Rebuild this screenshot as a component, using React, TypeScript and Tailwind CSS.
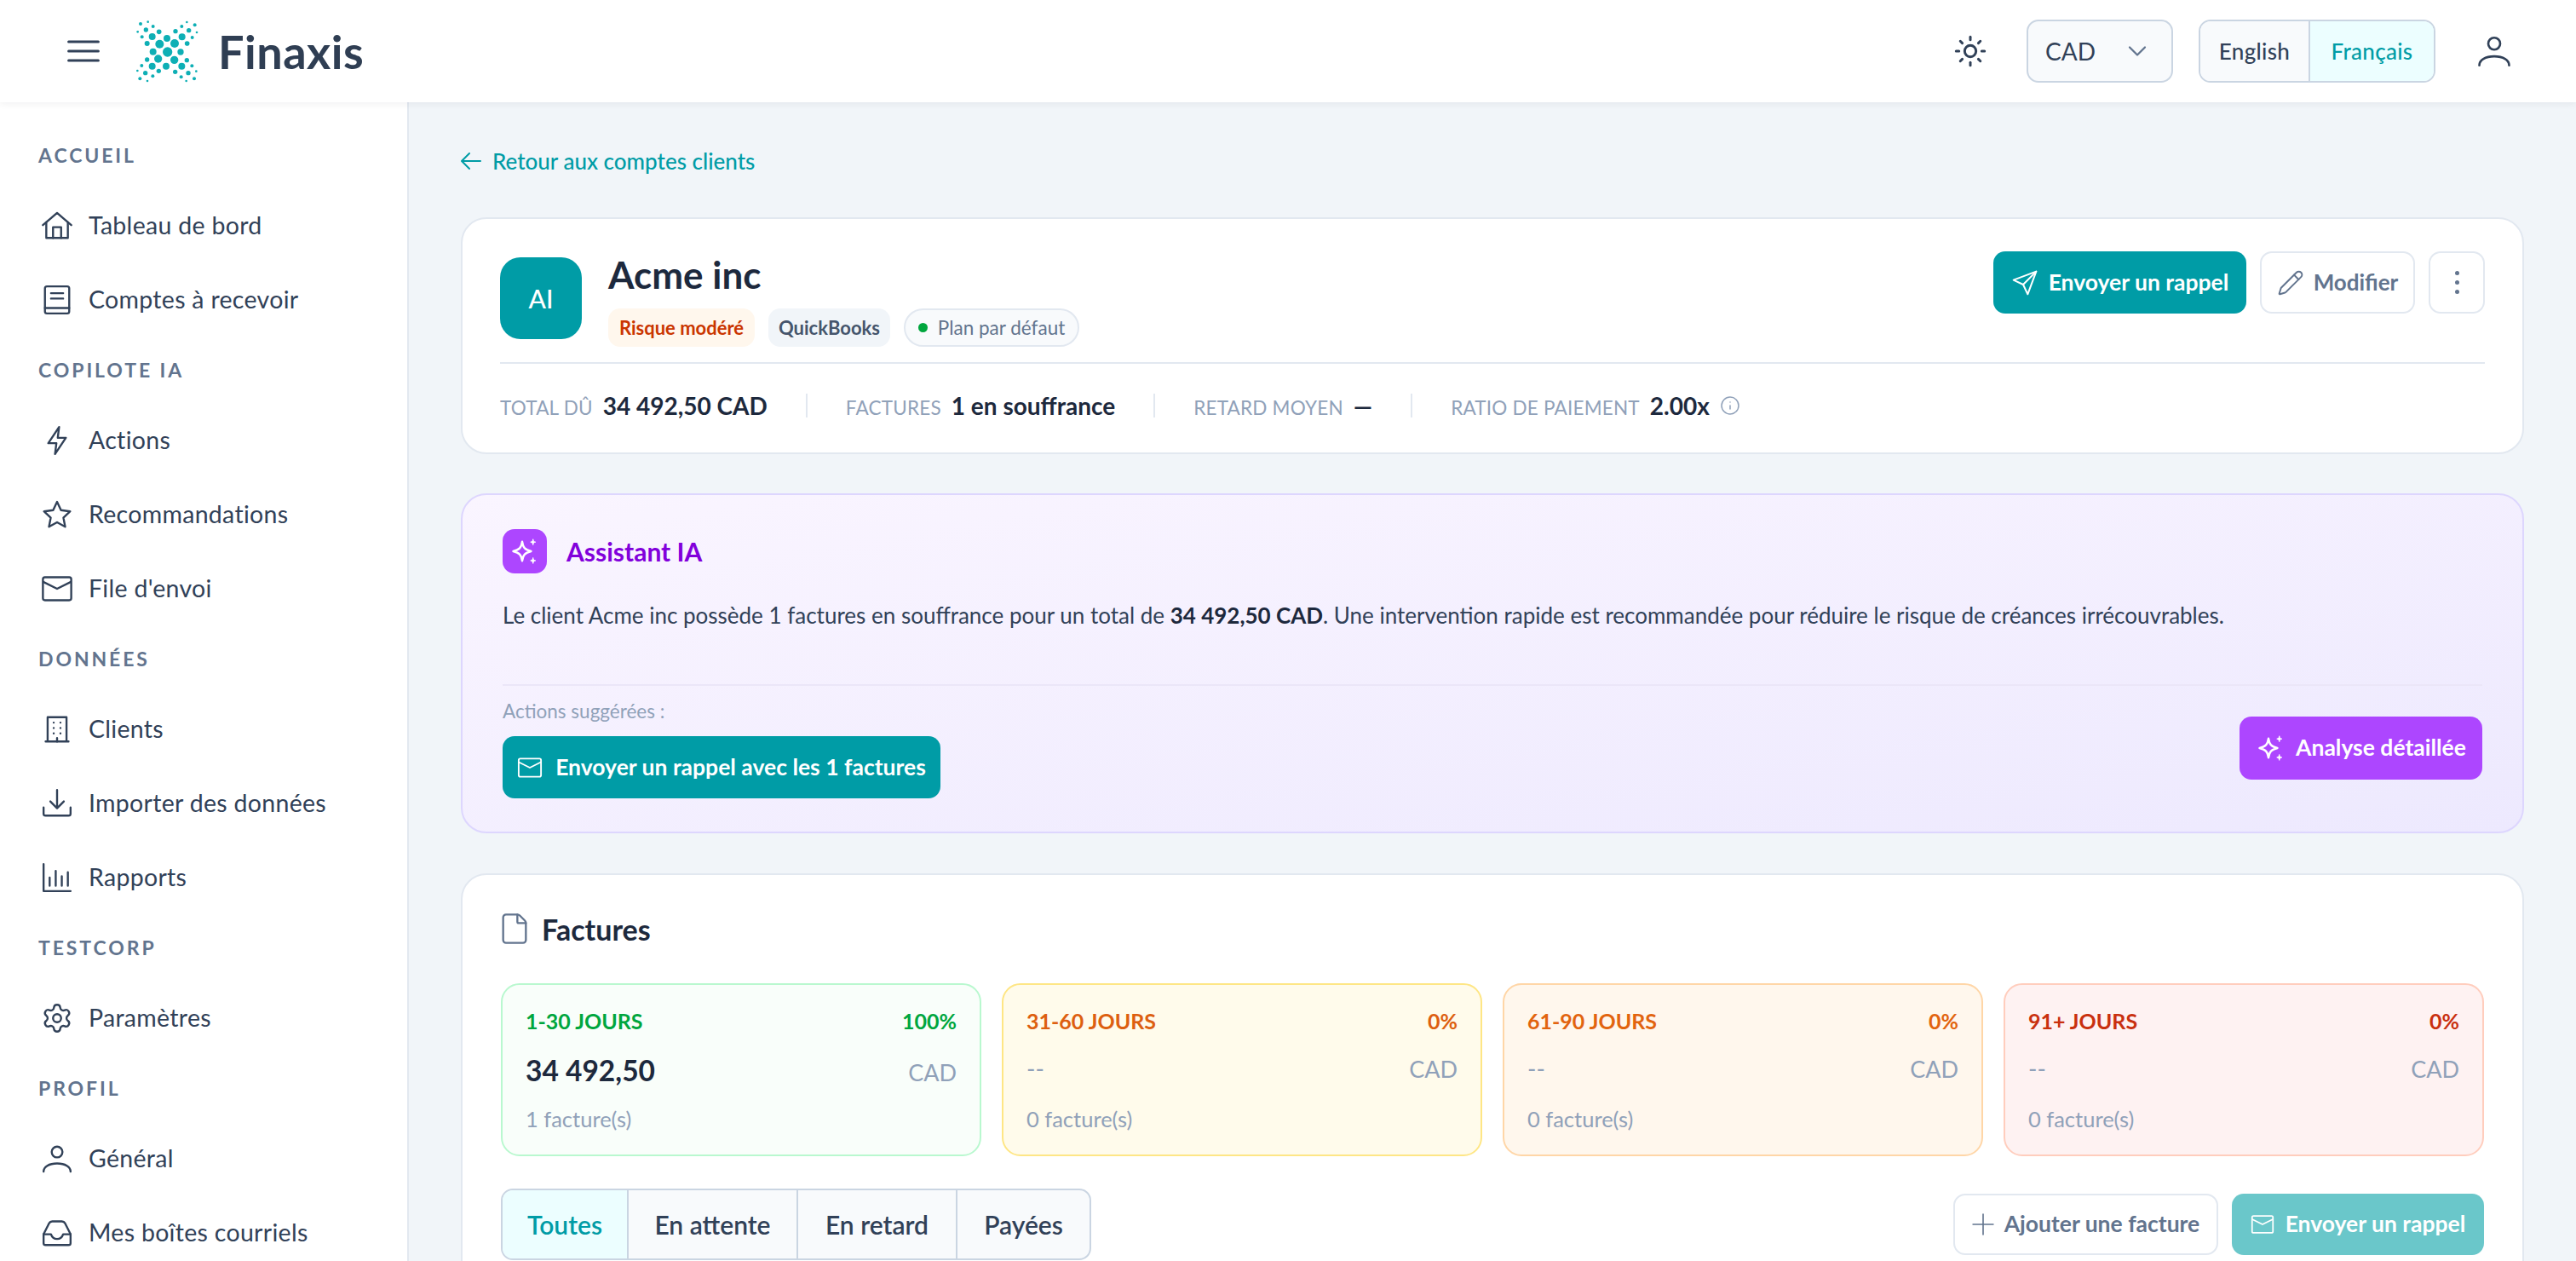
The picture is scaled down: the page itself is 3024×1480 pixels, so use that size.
import { ChevronDown, File, Info, Pencil, Settings, Sun } from "lucide-react";
import type { ReactNode } from "react";

function Ico({ children, className = "w-[38px] h-[38px]", sw = 1.5 }: { children: ReactNode; className?: string; sw?: number }) {
  return (
    <svg viewBox="0 0 24 24" fill="none" stroke="currentColor" strokeWidth={sw} strokeLinecap="round" strokeLinejoin="round" className={className}>
      {children}
    </svg>
  );
}

const HomeIcon = () => (
  <Ico>
    <path d="M1.500 11.500 12 2.500l10.500 9" />
    <path d="M4 9.500V21h16V9.500" />
    <path d="M9 21v-8h6v8" />
  </Ico>
);
const BookIcon = () => (
  <Ico>
    <rect x="3" y="2" width="18" height="20" rx="1.500" />
    <path d="M7.500 7h9M7.500 11h9M3 18h18" />
  </Ico>
);
const BoltIcon = () => (
  <Ico>
    <path d="M13.500 2 5.500 14h6l-1 8L18.500 10h-6z" />
  </Ico>
);
const StarIcon = () => (
  <Ico>
    <path d="m12 2.500 2.900 6.200 6.800.9-5 4.700 1.300 6.700-6-3.300-6 3.300 1.300-6.700-5-4.700 6.800-.9z" />
  </Ico>
);
const MailIcon = ({ className }: { className?: string }) => (
  <Ico className={className}>
    <rect x="1.500" y="3.500" width="21" height="17" rx="1.500" />
    <path d="m2 7 10 5 10-5" />
  </Ico>
);
const BuildingIcon = () => (
  <Ico>
    <path d="M5 21V3h14v18M3.500 21h17" />
    <path d="M9.500 7h.01M14.500 7h.01M9.500 11h.01M14.500 11h.01M9.500 15h.01M14.500 15h.01M12 18.500V21" />
  </Ico>
);
const DownloadIcon = () => (
  <Ico>
    <path d="M2 15v4.500A1.500 1.500 0 0 0 3.500 21h17a1.500 1.500 0 0 0 1.500-1.500V15" />
    <path d="M12 2v13M7 10.500l5 5 5-5" />
  </Ico>
);
const ChartIcon = () => (
  <Ico>
    <path d="M2 2v20h20" />
    <path d="M6.500 12v6M11 7v11M15.500 11v7M20 8v10" />
  </Ico>
);
const UserIcon = ({ className }: { className?: string }) => (
  <Ico className={className}>
    <circle cx="12" cy="7" r="4" />
    <path d="M2 21.500c0-3.500 4-6 10-6s10 2.500 10 6" />
  </Ico>
);
const InboxIcon = () => (
  <Ico>
    <path d="M2 13v6.500A1.500 1.500 0 0 0 3.500 21h17a1.500 1.500 0 0 0 1.500-1.500V13" />
    <path d="m2 13 4-8a3 3 0 0 1 2.500-1.500h7A3 3 0 0 1 18 5l4 8" />
    <path d="M2 13h5.500c.8 2.500 2.300 3.500 4.500 3.500s3.700-1 4.500-3.500H22" />
  </Ico>
);
const SparkIcon = ({ className }: { className: string }) => (
  <svg viewBox="0 0 24 24" className={className} fill="none" stroke="currentColor" strokeWidth={1.600} strokeLinejoin="round">
    <path d="M10 4.500c.7 4.700 2.200 6.400 7 7.500-4.800 1.100-6.300 2.800-7 7.500-.7-4.700-2.200-6.400-7-7.500 4.800-1.100 6.300-2.800 7-7.500Z" />
    <path d="M18.500 2.500c.2 1.500.6 2 2 2.300-1.400.3-1.800.8-2 2.300-.2-1.500-.6-2-2-2.300 1.400-.3 1.800-.8 2-2.300ZM18.500 17c.2 1.500.6 2 2 2.300-1.400.3-1.800.8-2 2.300-.2-1.500-.6-2-2-2.300 1.400-.3 1.800-.8 2-2.300Z" fill="currentColor" strokeWidth={0.6} />
  </svg>
);

const logoDots = [
  [103, 83, 6], [129, 76, 4], [147, 92, 6], [93, 111, 4], [122, 104, 8], [168, 111, 8.5], [108, 129, 6], [144, 128, 12], [196, 134, 12], [126, 152, 9], [170, 154, 15], [223, 152, 15],
  [266, 77, 4], [294, 87, 6], [248, 92, 6], [273, 106, 8], [226, 109, 8], [301, 113, 4], [285, 131, 6], [249, 129, 12], [267, 152, 8.5],
  [147, 181, 12], [198, 182, 17], [244, 182, 11], [165, 206, 14], [222, 210, 14], [126, 209, 8], [266, 211, 8],
  [107, 230, 6], [144, 232, 12], [193, 232, 12], [248, 232, 12], [284, 231, 6], [92, 248, 4], [120, 256, 8], [167, 249, 8], [225, 252, 8], [271, 256, 8], [299, 250, 4], [146, 267, 6], [246, 270, 6], [101, 276, 6], [127, 284, 4], [292, 276, 6], [264, 284, 4],
];

const nav = [
  { title: "ACCUEIL", items: [{ icon: <HomeIcon />, label: "Tableau de bord" }, { icon: <BookIcon />, label: "Comptes à recevoir" }] },
  { title: "COPILOTE IA", items: [{ icon: <BoltIcon />, label: "Actions" }, { icon: <StarIcon />, label: "Recommandations" }, { icon: <MailIcon className="w-[38px] h-[38px]" />, label: "File d'envoi" }] },
  { title: "DONNÉES", items: [{ icon: <BuildingIcon />, label: "Clients" }, { icon: <DownloadIcon />, label: "Importer des données" }, { icon: <ChartIcon />, label: "Rapports" }] },
  { title: "TESTCORP", items: [{ icon: <Settings className="w-[38px] h-[38px]" strokeWidth={1.5} />, label: "Paramètres" }] },
  { title: "PROFIL", items: [{ icon: <UserIcon className="w-[38px] h-[38px]" />, label: "Général" }, { icon: <InboxIcon />, label: "Mes boîtes courriels" }] },
];

const buckets = [
  { label: "1-30 JOURS", pct: "100%", amount: "34 492,50", count: "1 facture(s)", box: "bg-[#f9fefa] border-[#b9f8cf]", tone: "text-[#00a63e]" },
  { label: "31-60 JOURS", pct: "0%", amount: "", count: "0 facture(s)", box: "bg-[#fffbeb] border-[#fee685]", tone: "text-[#dd5f10]" },
  { label: "61-90 JOURS", pct: "0%", amount: "", count: "0 facture(s)", box: "bg-[#fff7ed] border-[#ffd6a7]", tone: "text-[#e2640f]" },
  { label: "91+ JOURS", pct: "0%", amount: "", count: "0 facture(s)", box: "bg-[#fef2f2] border-[#ffcdbd]", tone: "text-[#c9300f]" },
];

function Stat({ label, children }: { label: string; children: ReactNode }) {
  return (
    <div className="flex items-baseline gap-[12px]">
      <span className="text-[22.5px] text-[#90a1b9] tracking-[0.2px]">{label}</span>
      <span className="text-[28px] font-bold text-[#1d293d]">{children}</span>
    </div>
  );
}

const Sep = () => <div className="w-[2px] h-[28px] bg-[#e2e8f0]" />;

export default function App() {
  return (
    <div className="h-screen flex flex-col overflow-hidden bg-[#f1f5f9] text-[#314158] [font-family:Lato,sans-serif]">
      <header className="h-[120px] shrink-0 bg-white shadow-[0_2px_8px_rgba(15,23,42,0.06)] flex items-center pl-[79px] pr-[75px] relative z-10">
        <svg viewBox="0 0 24 24" className="w-[38px] h-[38px] mr-[42px]" fill="none" stroke="#314158" strokeWidth={1.9} strokeLinecap="round">
          <path d="M1 5h22M1 12h22M1 19h22" />
        </svg>
        <svg viewBox="85 68 222 222" className="w-[74px] h-[74px] mr-[23px]">
          {logoDots.map(([cx, cy, r], i) => (
            <circle key={i} cx={cx} cy={cy} r={r} fill="#0eafb5" />
          ))}
        </svg>
        <span className="text-[54px] font-bold text-[#2f3e53] tracking-[0.5px]">Finaxis</span>
        <div className="ml-auto flex items-center">
          <Sun className="w-[40px] h-[40px] mr-[46px]" strokeWidth={1.8} />
          <div className="w-[172px] h-[74px] rounded-[14px] border-2 border-[#cad5e2] bg-[#f8fafc] flex items-center justify-between pl-[20px] pr-[22px] text-[28px] mr-[30px]">
            CAD
            <ChevronDown className="w-[36px] h-[36px] text-[#62748e]" strokeWidth={1.5} />
          </div>
          <div className="flex h-[74px] w-[278px] rounded-[14px] border-2 border-[#cad5e2] overflow-hidden text-[26px] font-medium tracking-[0.3px] mr-[48px]">
            <div className="w-[129px] bg-[#f8fafc] border-r-2 border-[#cad5e2] flex items-center justify-center">English</div>
            <div className="flex-1 bg-[#ecfeff] text-[#009ca6] flex items-center justify-center">Français</div>
          </div>
          <UserIcon className="w-[42px] h-[42px]" />
        </div>
      </header>

      <div className="flex-1 flex min-h-0">
        <aside className="w-[480px] shrink-0 bg-white border-r-2 border-[#e2e8f0] pt-[23px] overflow-hidden">
          {nav.map((section) => (
            <div key={section.title}>
              <div className="h-[78px] flex items-center pl-[45px] text-[23px] font-bold text-[#62748e] tracking-[2.9px]">{section.title}</div>
              {section.items.map((item) => (
                <div key={item.label} className="h-[87px] flex items-center pl-[48px] gap-[18px] text-[28.5px] tracking-[0.3px]">
                  {item.icon}
                  <span>{item.label}</span>
                </div>
              ))}
            </div>
          ))}
        </aside>

        <main className="flex-1 min-w-0 px-[61px] pt-[49px] overflow-hidden">
          <a className="h-[40px] flex items-center gap-[13px] text-[#009ca6] text-[26px] font-medium mb-[46px]">
            <Ico className="w-[24px] h-[24px]" sw={2}>
              <path d="M23 12H2M10 3l-9 9 9 9" />
            </Ico>
            Retour aux comptes clients
          </a>

          <section className="bg-white border-2 border-[#e2e8f0] rounded-[30px] px-[44px] pt-[36px] pb-[41px]">
            <div className="flex justify-between border-b-2 border-[#e2e8f0] pb-[18px]">
              <div className="flex items-center gap-[31px]">
                <div className="w-[96px] h-[96px] rounded-[24px] bg-[#009ca6] text-white flex items-center justify-center text-[30px] font-medium">AI</div>
                <div>
                  <div className="text-[44px] leading-[58px] font-bold text-[#1d293d]">Acme inc</div>
                  <div className="flex gap-[16px] mt-[11px]">
                    <span className="h-[45px] w-[172px] rounded-[14px] bg-[#fff7ed] text-[#ca3500] text-[22px] font-bold flex items-center justify-center">Risque modéré</span>
                    <span className="h-[45px] w-[143px] rounded-[14px] bg-[#f1f5f9] text-[#45556c] text-[22px] font-bold flex items-center justify-center">QuickBooks</span>
                    <span className="h-[45px] w-[206px] rounded-full bg-[#f8fafc] border-2 border-[#e2e8f0] text-[#62748e] text-[22.5px] flex items-center justify-center gap-[12px]">
                      <i className="w-[11px] h-[11px] rounded-full bg-[#00a63e]" />
                      Plan par défaut
                    </span>
                  </div>
                </div>
              </div>
              <div className="flex items-start gap-[16px] mt-[2px]">
                <button className="w-[297px] h-[73px] rounded-[14px] bg-[#009ca6] text-white text-[26.5px] font-bold flex items-center justify-center gap-[12px]">
                  <Ico className="w-[32px] h-[32px]">
                    <path d="M22 2 2 9.500l8.500 4L14.500 22z" />
                    <path d="M22 2 10.500 13.500" />
                  </Ico>
                  Envoyer un rappel
                </button>
                <button className="w-[182px] h-[73px] rounded-[14px] border-2 border-[#e2e8f0] text-[#62748e] text-[26px] font-bold flex items-center justify-center gap-[11px]">
                  <Pencil className="w-[32px] h-[32px]" strokeWidth={1.5} />
                  Modifier
                </button>
                <button className="w-[66px] h-[73px] rounded-[14px] border-2 border-[#e2e8f0] text-[#62748e] flex flex-col items-center justify-center gap-[6px]">
                  <i className="w-[5px] h-[5px] rounded-full bg-[#62748e]" />
                  <i className="w-[5px] h-[5px] rounded-full bg-[#62748e]" />
                  <i className="w-[5px] h-[5px] rounded-full bg-[#62748e]" />
                </button>
              </div>
            </div>
            <div className="flex items-center gap-[45px] mt-[35px] h-[28px]">
              <Stat label="TOTAL DÛ">34 492,50 CAD</Stat>
              <Sep />
              <Stat label="FACTURES">1 en souffrance</Stat>
              <Sep />
              <Stat label="RETARD MOYEN">—</Stat>
              <Sep />
              <div className="flex items-center gap-[12px]">
                <Stat label="RATIO DE PAIEMENT">2.00x</Stat>
                <Info className="w-[24px] h-[24px] text-[#90a1b9]" strokeWidth={1.5} />
              </div>
            </div>
          </section>

          <section className="mt-[46px] rounded-[30px] border-2 border-[#ddd6fe] bg-gradient-to-br from-[#faf5ff] to-[#ede9fe] px-[47px] pt-[40px] pb-[39px]">
            <div className="flex items-center gap-[23px]">
              <div className="w-[52px] h-[52px] rounded-[14px] bg-[#ad46ff] text-white flex items-center justify-center">
                <SparkIcon className="w-[36px] h-[36px]" />
              </div>
              <h2 className="text-[30px] font-bold text-[#8200db]">Assistant IA</h2>
            </div>
            <p className="mt-[27px] text-[26px] leading-[44px]">
              Le client Acme inc possède 1 factures en souffrance pour un total de <b className="font-bold text-[#1d293d]">34 492,50 CAD</b>. Une intervention rapide est recommandée pour réduire le risque de créances irrécouvrables.
            </p>
            <div className="mt-[59px] h-[2px] bg-[#ebe6f8]" />
            <div className="flex items-center justify-between pt-[14px]">
              <div>
                <div className="text-[22.5px] leading-[32px] text-[#90a1b9]">Actions suggérées :</div>
                <button className="mt-[13px] w-[514px] h-[73px] rounded-[14px] bg-[#009ca6] text-white text-[26.5px] font-bold flex items-center justify-center gap-[15px]">
                  <MailIcon className="w-[30px] h-[30px]" />
                  Envoyer un rappel avec les 1 factures
                </button>
              </div>
              <button className="w-[285px] h-[74px] rounded-[14px] bg-[#ad46ff] text-white text-[26.5px] font-bold flex items-center justify-center gap-[11px]">
                <SparkIcon className="w-[36px] h-[36px]" />
                Analyse détaillée
              </button>
            </div>
          </section>

          <section className="mt-[47px] rounded-[30px] border-2 border-[#e2e8f0] bg-white px-[45px] pt-[39px] pb-[40px]">
            <div className="flex items-center gap-[12px] h-[48px]">
              <File className="w-[40px] h-[40px] -ml-[4px] text-[#62748e]" strokeWidth={1.4} />
              <h2 className="text-[34px] font-bold text-[#1d293d]">Factures</h2>
            </div>
            <div className="grid grid-cols-4 gap-[24px] mt-[40px]">
              {buckets.map((b) => (
                <div key={b.label} className={`h-[203px] rounded-[22px] border-2 px-[27px] pt-[26px] ${b.box}`}>
                  <div className={`flex justify-between text-[25px] leading-[32px] font-bold ${b.tone}`}>
                    <span>{b.label}</span>
                    <span>{b.pct}</span>
                  </div>
                  <div className="flex justify-between items-baseline mt-[20px] h-[44px]">
                    {b.amount ? (
                      <span className="text-[33.5px] leading-[44px] font-bold text-[#1d293d]">{b.amount}</span>
                    ) : (
                      <span className="text-[28px] leading-[40px] text-[#90a1b9]">--</span>
                    )}
                    <span className="text-[27px] text-[#90a1b9]">CAD</span>
                  </div>
                  <div className="mt-[19px] text-[25.5px] leading-[32px] text-[#90a1b9]">{b.count}</div>
                </div>
              ))}
            </div>
            <div className="flex items-center justify-between mt-[38px]">
              <div className="flex h-[84px] rounded-[14px] border-2 border-[#cad5e2] overflow-hidden text-[30px] font-semibold bg-[#f8fafc]">
                <div className="w-[148px] bg-[#ecfeff] text-[#009ca6] border-r-2 border-[#cad5e2] flex items-center justify-center">Toutes</div>
                <div className="w-[199px] border-r-2 border-[#cad5e2] flex items-center justify-center">En attente</div>
                <div className="w-[187px] border-r-2 border-[#cad5e2] flex items-center justify-center">En retard</div>
                <div className="w-[155px] flex items-center justify-center">Payées</div>
              </div>
              <div className="flex gap-[16px]">
                <button className="w-[311px] h-[72px] rounded-[14px] border-2 border-[#e2e8f0] bg-white text-[#62748e] text-[26.5px] font-bold flex items-center justify-center gap-[12px]">
                  <Ico className="w-[26px] h-[26px]">
                    <path d="M12 1v22M1 12h22" />
                  </Ico>
                  Ajouter une facture
                </button>
                <button className="w-[296px] h-[72px] rounded-[14px] bg-[#6ac7ca] text-white text-[26.5px] font-bold flex items-center justify-center gap-[13px]">
                  <MailIcon className="w-[28px] h-[28px]" />
                  Envoyer un rappel
                </button>
              </div>
            </div>
          </section>
        </main>
      </div>
    </div>
  );
}
